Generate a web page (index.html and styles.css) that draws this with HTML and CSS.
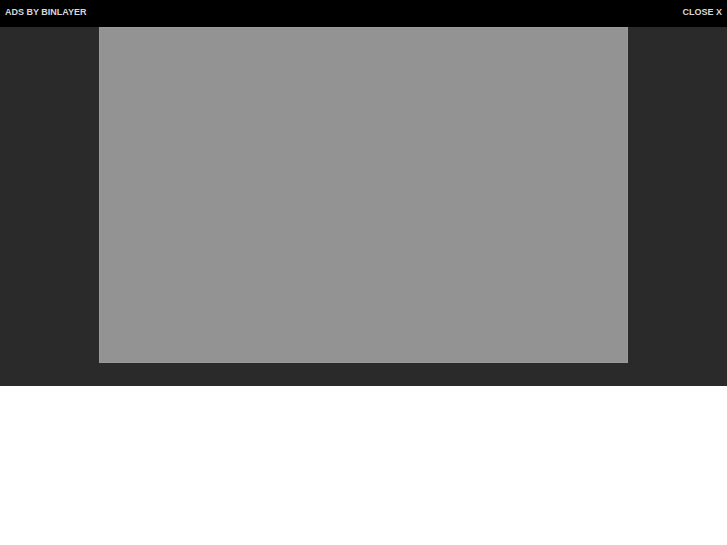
FILE: index.html
```html
<!DOCTYPE html>
<html>
<head>
<meta charset="utf-8">
<link rel="stylesheet" href="styles.css">
</head>
<body>
<div class="bar">
  <span class="label">ADS BY BINLAYER</span>
  <span class="label close">CLOSE X</span>
</div>
<div class="stage">
  <div class="ad"></div>
</div>
</body>
</html>
```
FILE: styles.css
```css
html, body { margin: 0; padding: 0; background: #ffffff; }
body { font-family: "Liberation Sans", Arial, sans-serif; }
.bar {
  height: 27px;
  background: #000000;
  display: flex;
  justify-content: space-between;
  align-items: center;
  padding: 0 5px;
}
.label {
  color: #d8d8d8;
  font-size: 9px;
  font-weight: bold;
  line-height: 1;
  padding-bottom: 3px;
}
.stage {
  background: #2a2a2a;
  height: 359px;
  display: flex;
  justify-content: center;
}
.ad {
  width: 527px;
  height: 334px;
  background: #939393;
  border: 1px solid #9a9a9a;
  margin-left: 0px;
}
```
